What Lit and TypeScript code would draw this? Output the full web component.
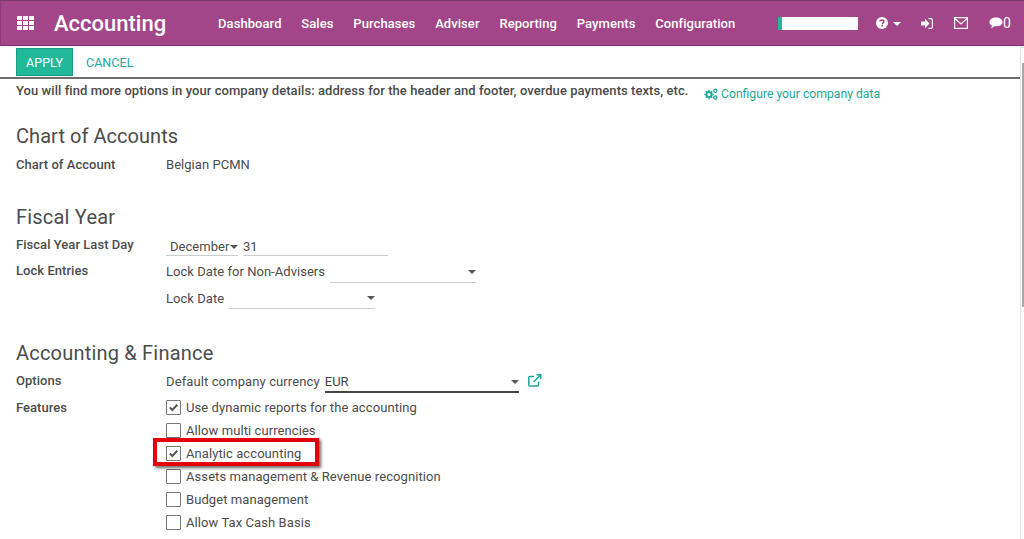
import { LitElement, html, css, svg } from "lit";
import { customElement } from "lit/decorators.js";

const caret = html`<span class="caret"></span>`;

@customElement("app-root")
export class AppRoot extends LitElement {
  static styles = css`
    :host { display: block; width: 1024px; height: 539px; overflow: hidden; position: relative; background: #fff;
      font-family: Roboto, "Liberation Sans", sans-serif; font-size: 13px; letter-spacing: .04px; color: #4c4c4c; }
    * { box-sizing: border-box; }
    .nav { height: 46px; background: #a24689; border-top: 1px solid #7d3a6c; border-bottom: 1px solid #7a2a66; border-left: 1px solid #8a3d76; display: flex; align-items: center; color: #fff; }
    .apps { width: 17px; height: 14px; margin-left: 16px; display: block; }
    .brand { font-size: 22px; font-weight: 500; margin-left: 20px; width: 164px; line-height: 1; padding-top: 1px; letter-spacing: 0; }
    .menu { display: flex; gap: 19.8px; font-size: 13px; letter-spacing: .07px; font-weight: 500; width: 560px; }
    .search { width: 80px; height: 13px; background: #fff; border-left: 4px solid #21b799; border-right: 1px solid #eee; }
    .icons { display: flex; align-items: center; }
    .icons svg { display: block; }
    .help { margin-left: 18px; display: flex; align-items: center; gap: 5px; }
    .wcaret { width: 0; height: 0; border-left: 4px solid transparent; border-right: 4px solid transparent; border-top: 4px solid #fff; margin-top: 2px; }
    .login { margin-left: 20px; }
    .mail { margin-left: 21px; }
    .chat { margin-left: 21px; display: flex; align-items: center; font-size: 14px; font-weight: 400; }
    .bar { height: 33px; border-bottom: 2px solid #6e6e6e; margin-right: 4px; padding: 2px 0 0 16px; display: flex; align-items: flex-start; }
    .apply { width: 57px; height: 28px; background: #21b799; border: 1px solid #1a9d83; color: #fff; font-size: 12.5px; display: flex; align-items: center; justify-content: center; }
    .cancel { color: #1fa896; font-size: 12.5px; margin-left: 13px; height: 28px; display: flex; align-items: center; }
    .form { padding: 0 0 0 16px; }
    .intro { height: 45px; display: flex; padding-top: 4px; line-height: 16px; }
    .intro b { font-weight: 500; color: #4a4a4a; width: 688px; letter-spacing: .06px; }
    .cfg { color: #1fa896; font-size: 12.2px; letter-spacing: 0; align-self: flex-start; margin-top: 3px; display: flex; align-items: center; gap: 3px; }
    h2 { font-size: 20px; font-weight: 400; margin: 0; height: 24px; line-height: 24px; letter-spacing: .05px; color: #4c4c4c; }
    h2.wide { letter-spacing: .2px; }
    .row { display: grid; grid-template-columns: 150px 1fr; }
    .row > b { font-weight: 500; line-height: 16px; color: #4c4c4c; }
    .coa { margin-top: 9px; height: 48px; line-height: 16px; }
    .fy { margin-top: 8px; height: 26px; }
    .field { border-bottom: 1px solid #ccc; height: 20px; margin-top: -1px; padding-top: 2px; display: flex; align-items: center; justify-content: space-between; line-height: 16px; }
    .line { display: flex; align-items: flex-start; }
    .caret { width: 0; height: 0; border-left: 4px solid transparent; border-right: 4px solid transparent; border-top: 4px solid #555; display: inline-block; }
    .lock { height: 54px; }
    .lock .line { height: 27px; padding-top: 1px; }
    .lock .field { width: 146px; margin-top: -1px; padding-top: 0; padding-bottom: 2px; }
    .lock .line + .line .field { margin-top: -2px; }
    .spacer { height: 24px; }
    .options { margin-top: 8px; height: 27px; }
    .options .lbl { margin-top: 1px; letter-spacing: .11px; }
    .eur { width: 194px; height: 22px; margin-top: -2px; padding-top: 1px; border-bottom: 2px solid #444; color: #444; }
    .eur .caret { margin-right: 0; }
    .lbl { line-height: 16px; margin-right: 5px; }
    .link { margin-left: 9px; margin-top: 1px; display: block; }
    .checks { display: flex; flex-direction: column; margin-top: -4px; }
    .chk { display: flex; align-items: center; gap: 5px; height: 23px; letter-spacing: .08px; }
    .box { width: 15px; height: 15px; border: 1px solid #777; border-radius: 1px; display: block; flex: none; background: #fff; }
    .highlight { position: absolute; left: 153px; top: 438px; width: 166px; height: 28px; border: 4px solid #e6000c; box-shadow: 2px 2px 3px rgba(0,0,0,.6); }
    .scroll { position: absolute; left: 1020px; top: 47px; width: 4px; bottom: 0; background: #fff; border-left: 1px solid #e4e4e4; border-top: 1px solid #e4e4e4; }
    .thumb { position: absolute; left: 1022px; top: 63px; width: 2px; height: 244px; background: #a9a9a9; }
  `;

  private box(on: boolean) {
    return on
      ? html`<svg class="box" viewBox="0 0 13 13"><path d="M2.800 6.400 5.300 9 10.300 3.800" fill="none" stroke="#555" stroke-width="2"/></svg>`
      : html`<span class="box"></span>`;
  }

  render() {
    const menus = ["Dashboard", "Sales", "Purchases", "Adviser", "Reporting", "Payments", "Configuration"];
    const feats: [string, boolean][] = [
      ["Use dynamic reports for the accounting", true],
      ["Allow multi currencies", false],
      ["Analytic accounting", true],
      ["Assets management & Revenue recognition", false],
      ["Budget management", false],
      ["Allow Tax Cash Basis", false],
    ];
    const cog = svg`<g fill="none" stroke="#1fa896"><circle cx="5" cy="6.500" r="2.600" stroke-width="2"/><path d="M5 1.800v1.400M5 9.800v1.400M.3 6.500h1.400M8.300 6.500h1.400M1.700 3.200l1 1M7.300 8.800l1 1M1.700 9.800l1-1M7.300 4.200l1-1" stroke-width="1.400"/><circle cx="11.300" cy="2.800" r="1.700" stroke-width="1.200"/><circle cx="11.300" cy="9.600" r="1.700" stroke-width="1.200"/></g>`;
    return html`
      <div class="nav">
        <svg class="apps" viewBox="0 0 17 14" fill="#fff">
          ${[0, 5, 10].map(y => [0, 6, 12].map(x => svg`<rect x=${x} y=${y} width="5" height="4"/>`))}
        </svg>
        <div class="brand">Accounting</div>
        <div class="menu">${menus.map(m => html`<span>${m}</span>`)}</div>
        <div class="search"></div>
        <div class="icons">
          <span class="help">
            <svg width="12" height="12" viewBox="0 0 12 12"><circle cx="6" cy="6" r="6" fill="#fff"/><path d="M4 4.600C4 3.400 5 3 6 3s2 .6 2 1.600C8 6 6.200 5.800 6.200 7.200" fill="none" stroke="#a24689" stroke-width="1.400"/><rect x="5.400" y="8" width="1.500" height="1.500" fill="#a24689"/></svg>
            <span class="wcaret"></span>
          </span>
          <svg class="login" width="12" height="11" viewBox="0 0 12 11"><path d="M0 3.500h4V.8L8.500 5.500 4 10.200V7.500H0z" fill="#fff"/><path d="M7.500 .7h2.700a1.200 1.200 0 0 1 1.200 1.200v7.200a1.200 1.200 0 0 1-1.200 1.200H7.500" fill="none" stroke="#fff" stroke-width="1.200"/></svg>
          <svg class="mail" width="14" height="12" viewBox="0 0 14 12"><rect x=".6" y=".6" width="12.800" height="10.800" fill="none" stroke="#fff" stroke-width="1.200"/><path d="M1 1.500 7 7l6-5.500" fill="none" stroke="#fff" stroke-width="1.200"/></svg>
          <span class="chat">
            <svg width="14" height="12" viewBox="0 0 14 12"><path d="M7 .5c3.600 0 6.500 1.900 6.500 4.400S10.600 9.300 7 9.300c-.6 0-1.100 0-1.700-.1C4.300 10.300 3 11 1.800 11.300c.6-.8 1-1.600 1.100-2.700C1.400 7.800.5 6.500.5 4.900.5 2.400 3.400.5 7 .5z" fill="#fff"/></svg>
            <span>0</span>
          </span>
        </div>
      </div>
      <div class="bar">
        <div class="apply">APPLY</div>
        <div class="cancel">CANCEL</div>
      </div>
      <div class="form">
        <div class="intro">
          <b>You will find more options in your company details: address for the header and footer, overdue payments texts, etc.</b>
          <span class="cfg">
            <svg width="14" height="12" viewBox="0 0 14 12">${cog}</svg>
            Configure your company data
          </span>
        </div>
        <h2>Chart of Accounts</h2>
        <div class="row coa"><b>Chart of Account</b><span>Belgian PCMN</span></div>
        <h2 class="wide">Fiscal Year</h2>
        <div class="row fy">
          <b>Fiscal Year Last Day</b>
          <div class="line">
            <div class="field" style="width:72px;padding-left:4px">December${caret}</div>
            <div class="field" style="width:145px;margin-left:5px">31</div>
          </div>
        </div>
        <div class="row lock">
          <b>Lock Entries</b>
          <div>
            <div class="line"><span class="lbl">Lock Date for Non-Advisers</span><div class="field"><span></span>${caret}</div></div>
            <div class="line"><span class="lbl">Lock Date</span><div class="field"><span></span>${caret}</div></div>
          </div>
        </div>
        <div class="spacer"></div>
        <h2 class="wide">Accounting &amp; Finance</h2>
        <div class="row options">
          <b>Options</b>
          <div class="line"><span class="lbl">Default company currency</span>
            <div class="field eur"><span>EUR</span>${caret}</div>
            <svg class="link" width="14" height="13" viewBox="0 0 14 13" fill="none" stroke="#1fa896" stroke-width="1.500"><path d="M10.500 7.500v3.600a1 1 0 0 1-1 1H1.800a1 1 0 0 1-1-1V3.500a1 1 0 0 1 1-1H6"/><path d="M5.500 8 12.500 1M8.500.7h4.300v4.300"/></svg>
          </div>
        </div>
        <div class="row">
          <b>Features</b>
          <div class="checks">
            ${feats.map(([t, on]) => html`<div class="chk">${this.box(on)}<span>${t}</span></div>`)}
          </div>
        </div>
      </div>
      <div class="highlight"></div>
      <div class="scroll"></div>
      <div class="thumb"></div>
    `;
  }
}
